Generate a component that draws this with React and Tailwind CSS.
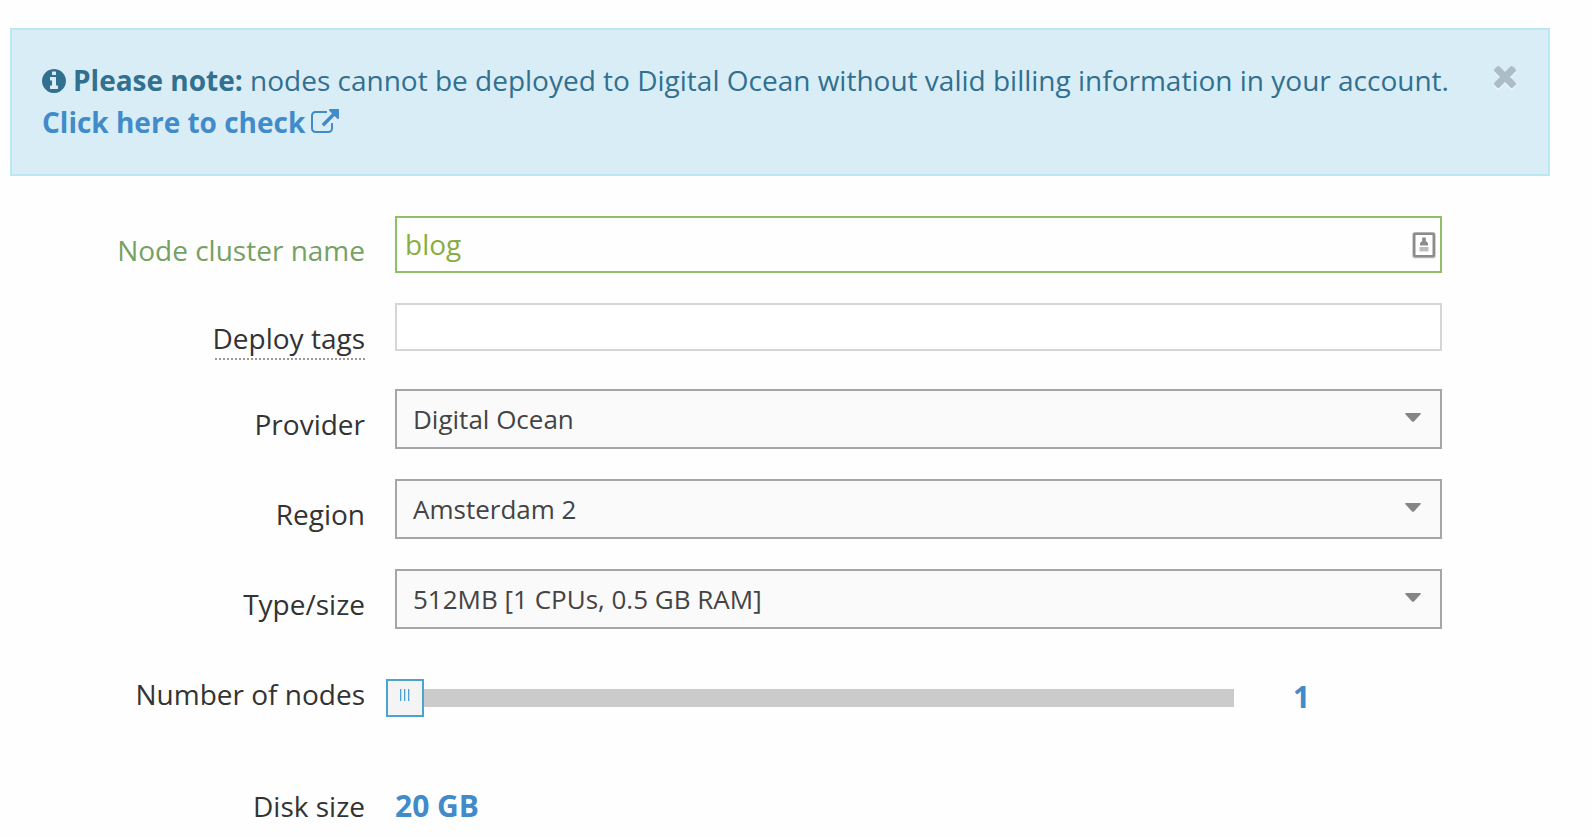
import React from "react";

const InfoCircle = () => (
  <svg viewBox="128 128 1536 1536" className="mr-[7px] inline-block size-6 align-[-2px]" fill="currentColor">
    <path d="M1152 1376v-160q0-14-9-23t-23-9h-96v-512q0-14-9-23t-23-9h-320q-14 0-23 9t-9 23v160q0 14 9 23t23 9h96v320h-96q-14 0-23 9t-9 23v160q0 14 9 23t23 9h448q14 0 23-9t9-23zm-128-896v-160q0-14-9-23t-23-9h-192q-14 0-23 9t-9 23v160q0 14 9 23t23 9h192q14 0 23-9t9-23zm640 416q0 209-103 385.5t-279.5 279.5-385.5 103-385.5-103-279.5-279.5-103-385.5 103-385.5 279.5-279.5 385.5-103 385.5 103 279.5 279.5 103 385.5z" />
  </svg>
);

const ExternalLink = () => (
  <svg viewBox="0 0 1792 1792" className="ml-[6px] inline-block size-7 align-[-4px]" fill="currentColor">
    <path d="M1408 928v320q0 119-84.5 203.5t-203.5 84.5h-832q-119 0-203.5-84.5t-84.5-203.5v-832q0-119 84.5-203.5t203.5-84.5h704q14 0 23 9t9 23v64q0 14-9 23t-23 9h-704q-66 0-113 47t-47 113v832q0 66 47 113t113 47h832q66 0 113-47t47-113v-320q0-14 9-23t23-9h64q14 0 23 9t9 23zm384-864v512q0 26-19 45t-45 19-45-19l-176-176-652 652q-10 10-23 10t-23-10l-114-114q-10-10-10-23t10-23l652-652-176-176q-19-19-19-45t19-45 45-19h512q26 0 45 19t19 45z" />
  </svg>
);

const Times = () => (
  <svg viewBox="302 366 1188 1188" className="size-[22px] drop-shadow-[0_2px_0_rgba(255,255,255,0.4)]" fill="currentColor">
    <path d="M1490 1322q0 40-28 68l-136 136q-28 28-68 28t-68-28l-294-294-294 294q-28 28-68 28t-68-28l-136-136q-28-28-28-68t28-68l294-294-294-294q-28-28-28-68t28-68l136-136q28-28 68-28t68 28l294 294 294-294q28-28 68-28t68 28l136 136q28 28 28 68t-28 68l-294 294 294 294q28 28 28 68z" />
  </svg>
);

const AutofillIcon = () => (
  <svg viewBox="0 0 24 28" className="h-7 w-6">
    <rect x="0" y="1" width="24" height="26.5" rx="2.5" fill="#d9d9d9" />
    <rect x="2.2" y="2.8" width="19.6" height="22.4" rx="1" fill="#fff" stroke="#8c8c8c" strokeWidth="2.6" />
    <path d="M10.2 6.5h3.6v3.5l2.2 2v2.4H8V12l2.2-2z" fill="#8c8c8c" />
    <rect x="7.5" y="16" width="9" height="4.4" fill="#bcbcbc" />
  </svg>
);

function Row({ label, className, labelClass = "pt-[15px]", children }) {
  return (
    <div className={`flex ${className}`}>
      <div className={`w-[365px] shrink-0 text-right leading-10 ${labelClass}`}>{label}</div>
      <div className="ml-[30px] w-[1047px]">{children}</div>
    </div>
  );
}

function Select({ value }) {
  return (
    <div className="flex h-[60px] items-center justify-between border-2 border-[#a6a6a6] bg-[#fafafa] pr-[19px] pl-4 text-[26px] text-[#444]">
      <span>{value}</span>
      <svg viewBox="0 0 16 9" className="mb-[3px] h-[9px] w-4" fill="#858585">
        <path d="M1 0h14q1 0 .8 1L9.2 8.3q-1.2 1-2.4 0L.2 1Q0 0 1 0z" />
      </svg>
    </div>
  );
}

export default function App() {
  return (
    <div className="h-[838px] w-[1592px] overflow-hidden bg-[#fefefe] pt-7 font-['Open_Sans',sans-serif] text-[28px] whitespace-nowrap text-[#333]">
      <div className="ml-[10px] flex h-[148px] w-[1540px] justify-between border-2 border-[#bce8f1] bg-[#d9edf7] pt-[29px] pr-8 pl-[30px] leading-[42px] text-[#31708f]">
        <div>
          <div>
            <InfoCircle />
            <b>Please note:</b> nodes cannot be deployed to Digital Ocean without valid billing information in your account.
          </div>
          <div className="font-bold text-[#428bca]">
            Click here to check
            <ExternalLink />
          </div>
        </div>
        <div className="pt-[7px] text-[#adbdc5]">
          <Times />
        </div>
      </div>

      <Row className="mt-10" label="Node cluster name" labelClass="pt-[14px] text-[#76a164]">
        <div className="flex h-[57px] items-center justify-between border-2 border-[#8fc065] pr-1 pl-2 text-[#8aad43]">
          <span className="pb-[2px]">blog</span>
          <AutofillIcon />
        </div>
      </Row>
      <Row
        className="mt-[30px] h-12"
        label={
          <span className="-ml-0.5 inline-flex h-[42px] w-[150px] justify-end border-b-2 border-dotted border-[#999]">
            Deploy tags
          </span>
        }
      >
        <div className="h-12 border-2 border-[#d5d5d5] bg-white" />
      </Row>
      <Row className="mt-[38px]" label="Provider">
        <Select value="Digital Ocean" />
      </Row>
      <Row className="mt-[30px]" label="Region">
        <Select value="Amsterdam 2" />
      </Row>
      <Row className="mt-[30px]" label="Type/size">
        <Select value="512MB [1 CPUs, 0.5 GB RAM]" />
      </Row>
      <Row className="mt-10 h-12" label="Number of nodes" labelClass="pt-[5px]">
        <div className="-ml-[9px] flex pt-[10px]">
          <div className="flex size-[38px] shrink-0 justify-center gap-[2px] border-2 border-[#4ca3d0] bg-[#f4f4f4] pt-2">
            <i className="h-3 w-[2px] border-l border-[#4ca3d0] bg-[#b5dcf0]" />
            <i className="h-3 w-[2px] border-l border-[#4ca3d0] bg-[#b5dcf0]" />
            <i className="h-3 w-[2px] border-l border-[#4ca3d0] bg-[#b5dcf0]" />
          </div>
          <div className="mt-[10px] h-[18px] w-[810px] shrink-0 bg-[#cbcbcb]" />
          <b className="-mt-px ml-[59px] text-[30px] leading-[38px] text-[#428bca]">1</b>
        </div>
      </Row>
      <Row className="mt-[69px]" label="Disk size" labelClass="">
        <b className="block text-[30px] leading-10 text-[#428bca]">20 GB</b>
      </Row>
    </div>
  );
}
